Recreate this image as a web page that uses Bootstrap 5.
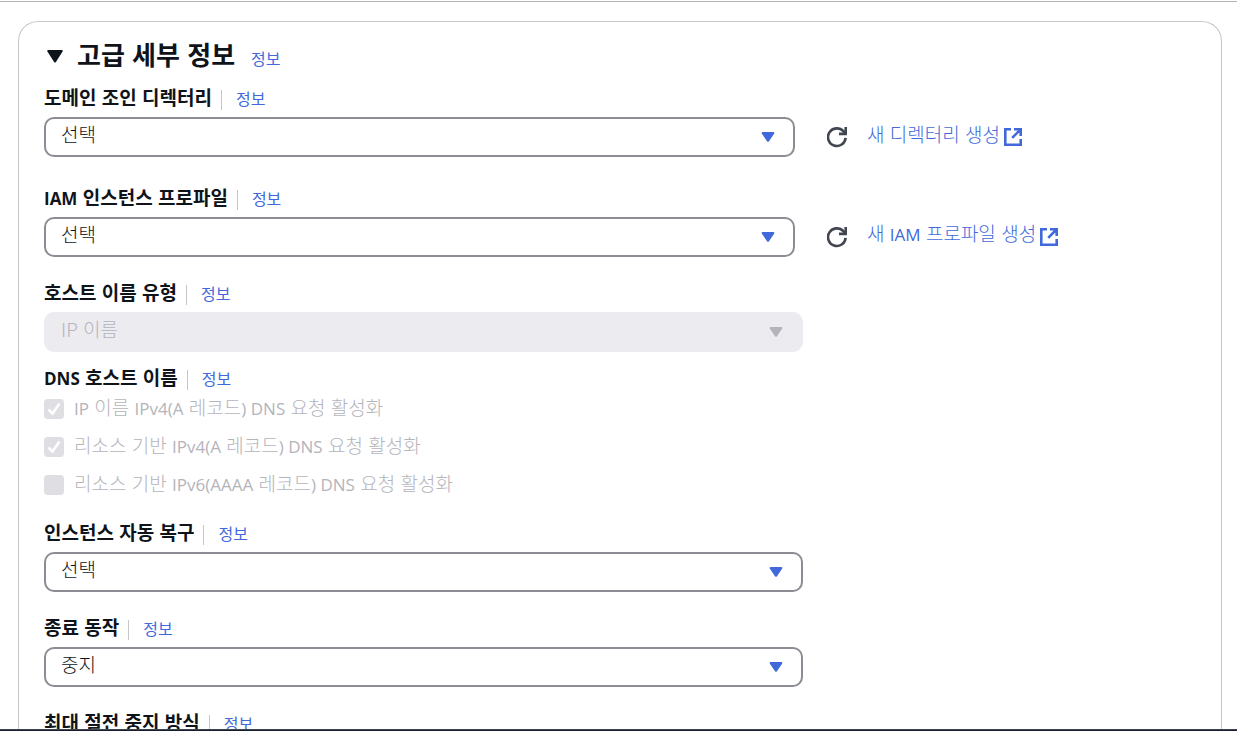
<!DOCTYPE html>
<html lang="ko">
<head>
<meta charset="utf-8">
<meta name="viewport" content="width=device-width, initial-scale=1">
<title>고급 세부 정보</title>
<link href="https://cdn.jsdelivr.net/npm/bootstrap@5.3.0/dist/css/bootstrap.min.css" rel="stylesheet">
<style>
  :root { --ink: #0f141a; --accent: #4169db; --edge: #8c8c94; --rule: #c6c6cd; --muted: #b4b4bb; }
  body { font-family: "Noto Sans CJK KR", sans-serif; font-size: 19px; font-weight: 300; line-height: 25px; color: var(--ink); }
  .page { border-top: 1px solid #b4b4bb; margin-top: 1px; }
  .page-end { height: 2px; background: #161d2e; border-top: 1px solid #424650; }
  .panel { border: 1px solid var(--rule); border-bottom: 0; border-radius: 20px 20px 0 0; margin: 19px 15px 0 18px; padding: 19px 25px 0; }
  .latin { font-family: "Open Sans", sans-serif; font-size: 17px; font-weight: 400; }
  .panel a { color: var(--accent); text-decoration: none; }
  .panel a:hover { text-decoration: underline; }
  .panel a.info { font-size: 16px; font-weight: 400; }
  .section-title { font-size: 26px; line-height: 26px; padding-bottom: 4px; font-weight: 700; color: var(--ink); }
  .toggle { width: 21px; height: 30px; }
  .field-head { height: 25px; margin-bottom: 5px; }
  .field-head label, .field-head .group-name { font-weight: 700; line-height: 19px; }
  .field-head label .latin, .field-head .group-name .latin { font-weight: 700; }
  .field-head .info { border-left: 1px solid var(--rule); margin-left: 9px; padding-left: 14px; line-height: 16px; margin-top: 3px; height: 20px; }
  .wide { padding-right: 9px; }
  .narrow { padding-right: 17px; }
  .picker { position: relative; }
  .picker svg { position: absolute; right: 20px; top: 15px; pointer-events: none; fill: var(--accent); }
  .picker .form-select { height: 40px; border: 2px solid var(--edge); border-radius: 10px; padding: 0 40px 6px 15px; background-image: none; font-size: 19px; font-weight: 300; line-height: 30px; color: var(--ink); }
  .picker .form-select:disabled { background-color: #ebebf0; border-color: #ebebf0; color: var(--muted); opacity: 1; }
  .picker .form-select:disabled + svg { fill: var(--muted); }
  .refresh { width: 20px; height: 22px; color: #424650; }
  .aside { padding-left: 15px; gap: 20px; }
  .aside a span { line-height: 22px; }
  .aside a > span { padding-bottom: 6px; }
  .checks { gap: 13px; margin-bottom: 24px; color: var(--muted); }
  .checks .form-check-input { width: 20px; height: 20px; margin: 2px 10px 0 0; border: 0; border-radius: 4px; background-color: #dedee3; opacity: 1; flex: none; }
  .checks .form-check-input:checked { background-color: #dedee3; background-size: 20px 20px; background-image: url("data:image/svg+xml,%3csvg xmlns='http://www.w3.org/2000/svg' viewBox='0 0 20 20'%3e%3cpath d='M4.5 10.5l4 4 7-10' fill='none' stroke='white' stroke-width='2.5'/%3e%3c/svg%3e"); }
  .panel .checks label { height: 25px; line-height: 19px; opacity: 1; }
  .gap-a { margin-bottom: 30px; }
  .gap-b { margin-bottom: 25px; }
  .gap-c { margin-bottom: 15px; }
</style>
</head>
<body class="bg-white">
<svg class="d-none" xmlns="http://www.w3.org/2000/svg">
  <symbol id="caret" viewBox="0 0 14 10"><path d="M1.5 0h11q1.2.3.6 1.7L8 9.2q-1 1.2-2 0L.9 1.7Q.3.3 1.5 0z"/></symbol>
  <symbol id="reload" viewBox="0 0 20 22"><g fill="none" stroke="currentColor" stroke-width="2.6"><path d="M18.6 11.8a8.8 8.8 0 1 1-2.3-6.6l2.2 2.3"/><path d="M18.7 1v6.9H12"/></g></symbol>
  <symbol id="external" viewBox="0 0 18 18"><g fill="none" stroke="currentColor" stroke-width="2.6"><path d="M7 1.3H1.3v15.4h15.4V11"/><path d="M10 1.3h6.7V8M16.5 1.5L8.2 9.8"/></g></symbol>
</svg>
<div class="vh-100 d-flex flex-column overflow-hidden">
  <main class="page flex-grow-1 overflow-hidden">
    <section class="panel">
      <header class="d-flex align-items-center mb-3">
        <button type="button" class="toggle btn p-0 border-0 d-flex align-items-center justify-content-center me-2" aria-label="접기"><svg width="16" height="13" viewBox="0 0 16 13"><path d="M1 0h14q1 .4.6 1.4L8.9 12q-.9 1.2-1.8 0L.4 1.4Q0 .4 1 0z" fill="#0f141a"/></svg></button>
        <h2 class="section-title mb-0 ms-1">고급 세부 정보</h2>
        <a href="#" class="info ms-3 pt-1">정보</a>
      </header>

      <div class="gap-a">
        <div class="field-head d-flex"><label for="domain">도메인 조인 디렉터리</label><a href="#" class="info">정보</a></div>
        <div class="row g-0 align-items-center">
          <div class="col-8 narrow"><div class="picker"><select id="domain" class="form-select"><option>선택</option></select><svg width="14" height="10"><use href="#caret"/></svg></div></div>
          <div class="col-4 aside d-flex align-items-center">
            <button type="button" class="refresh btn p-0 border-0 d-flex" aria-label="새로 고침"><svg width="20" height="22"><use href="#reload"/></svg></button>
            <a href="#" class="d-flex align-items-center"><span>새 디렉터리 생성</span><svg class="ms-1" width="18" height="18"><use href="#external"/></svg></a>
          </div>
        </div>
      </div>

      <div class="gap-b">
        <div class="field-head d-flex"><label for="profile"><span class="latin">IAM</span> 인스턴스 프로파일</label><a href="#" class="info">정보</a></div>
        <div class="row g-0 align-items-center">
          <div class="col-8 narrow"><div class="picker"><select id="profile" class="form-select"><option>선택</option></select><svg width="14" height="10"><use href="#caret"/></svg></div></div>
          <div class="col-4 aside d-flex align-items-center">
            <button type="button" class="refresh btn p-0 border-0 d-flex" aria-label="새로 고침"><svg width="20" height="22"><use href="#reload"/></svg></button>
            <a href="#" class="d-flex align-items-center"><span>새 <span class="latin">IAM</span> 프로파일 생성</span><svg class="ms-1" width="18" height="18"><use href="#external"/></svg></a>
          </div>
        </div>
      </div>

      <div class="gap-c">
        <div class="field-head d-flex"><label for="hosttype">호스트 이름 유형</label><a href="#" class="info">정보</a></div>
        <div class="row g-0"><div class="col-8 wide"><div class="picker"><select id="hosttype" class="form-select" disabled><option>IP 이름</option></select><svg width="14" height="10"><use href="#caret"/></svg></div></div></div>
      </div>

      <div role="group" aria-labelledby="dns">
        <div class="field-head d-flex"><span id="dns" class="group-name"><span class="latin">DNS</span> 호스트 이름</span><a href="#" class="info">정보</a></div>
        <div class="checks d-flex flex-column">
          <div class="d-flex"><input class="form-check-input" type="checkbox" id="c1" checked disabled><label for="c1"><span class="latin">IP</span> 이름 <span class="latin">IPv4(A</span> 레코드<span class="latin">) DNS</span> 요청 활성화</label></div>
          <div class="d-flex"><input class="form-check-input" type="checkbox" id="c2" checked disabled><label for="c2">리소스 기반 <span class="latin">IPv4(A</span> 레코드<span class="latin">) DNS</span> 요청 활성화</label></div>
          <div class="d-flex"><input class="form-check-input" type="checkbox" id="c3" disabled><label for="c3">리소스 기반 <span class="latin">IPv6(AAAA</span> 레코드<span class="latin">) DNS</span> 요청 활성화</label></div>
        </div>
      </div>

      <div class="gap-b">
        <div class="field-head d-flex"><label for="recovery">인스턴스 자동 복구</label><a href="#" class="info">정보</a></div>
        <div class="row g-0"><div class="col-8 wide"><div class="picker"><select id="recovery" class="form-select"><option>선택</option></select><svg width="14" height="10"><use href="#caret"/></svg></div></div></div>
      </div>

      <div class="gap-b">
        <div class="field-head d-flex"><label for="shutdown">종료 동작</label><a href="#" class="info">정보</a></div>
        <div class="row g-0"><div class="col-8 wide"><div class="picker"><select id="shutdown" class="form-select"><option>중지</option></select><svg width="14" height="10"><use href="#caret"/></svg></div></div></div>
      </div>

      <div class="field-head d-flex"><span class="group-name">최대 절전 중지 방식</span><a href="#" class="info">정보</a></div>
    </section>
  </main>
  <div class="page-end flex-shrink-0"></div>
</div>
<script src="https://cdn.jsdelivr.net/npm/bootstrap@5.3.0/dist/js/bootstrap.bundle.min.js"></script>
</body>
</html>
